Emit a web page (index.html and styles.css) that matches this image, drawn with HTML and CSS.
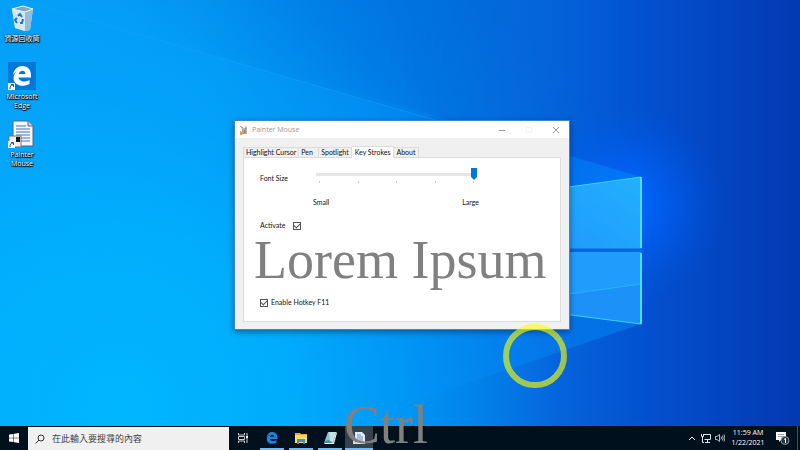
FILE: index.html
```html
<!DOCTYPE html>
<html lang="zh-Hant">
<head>
    <meta charset="UTF-8">
    <title>Painter Mouse</title>
    <meta name="viewport" content="width=device-width, initial-scale=1">
    <link rel="stylesheet" href="styles.css">
</head>
<body>

    <svg class="wallpaper" viewBox="0 0 800 450" preserveAspectRatio="xMidYMid slice" aria-hidden="true">
        <defs>
            <linearGradient id="base" x1="0" y1="0" x2="1" y2="0">
                <stop offset="0" stop-color="#069ff8"/>
                <stop offset="0.25" stop-color="#0499f5"/>
                <stop offset="0.5" stop-color="#0082ea"/>
                <stop offset="0.68" stop-color="#0567de"/>
                <stop offset="0.82" stop-color="#034fcd"/>
                <stop offset="1" stop-color="#0339b2"/>
            </linearGradient>
            <linearGradient id="topShade" gradientUnits="userSpaceOnUse" x1="330" y1="180" x2="480" y2="0">
                <stop offset="0" stop-color="#0060d0" stop-opacity="0"/>
                <stop offset="1" stop-color="#0058cc" stop-opacity="0.45"/>
            </linearGradient>
            <linearGradient id="topFade" x1="0" y1="0" x2="1" y2="0">
                <stop offset="0.5" stop-color="#fff"/>
                <stop offset="0.8" stop-color="#000"/>
            </linearGradient>
            <mask id="topMask">
                <rect width="800" height="450" fill="url(#topFade)"/>
            </mask>
            <radialGradient id="leftGlow" gradientUnits="userSpaceOnUse" cx="120" cy="410" r="440">
                <stop offset="0" stop-color="#00b6ff"/>
                <stop offset="0.4" stop-color="#00b2ff" stop-opacity="0.8"/>
                <stop offset="1" stop-color="#00a8ff" stop-opacity="0"/>
            </radialGradient>
            <radialGradient id="logoGlow" gradientUnits="userSpaceOnUse" cx="625" cy="205" r="100">
                <stop offset="0" stop-color="#006cff"/>
                <stop offset="0.4" stop-color="#0064ff" stop-opacity="0.6"/>
                <stop offset="1" stop-color="#0058e8" stop-opacity="0"/>
            </radialGradient>
            <linearGradient id="ray" gradientUnits="userSpaceOnUse" x1="20" y1="0" x2="480" y2="0">
                <stop offset="0" stop-color="#30b0ff" stop-opacity="0.1"/>
                <stop offset="1" stop-color="#20a4ff" stop-opacity="0.4"/>
            </linearGradient>
            <linearGradient id="beam" gradientUnits="userSpaceOnUse" x1="280" y1="0" x2="640" y2="0">
                <stop offset="0" stop-color="#009cff" stop-opacity="0"/>
                <stop offset="1" stop-color="#0090ff" stop-opacity="0.45"/>
            </linearGradient>
            <linearGradient id="pane" x1="0" y1="1" x2="1" y2="0">
                <stop offset="0" stop-color="#1f98fb"/>
                <stop offset="1" stop-color="#22b0ff"/>
            </linearGradient>
        </defs>
        <rect width="800" height="450" fill="url(#base)"/>
        <rect width="800" height="450" fill="url(#leftGlow)"/>
        <path d="M20 0H800V225L450 124Z" fill="url(#topShade)" mask="url(#topMask)"/>
        <path d="M20 0L480 133" stroke="url(#ray)" fill="none"/>
        <circle cx="625" cy="205" r="100" fill="url(#logoGlow)"/>
        <path d="M280 70L641 177V324L530 362L280 446Z" fill="url(#beam)"/>
        <path d="M540 191L641 177V249H540Z" fill="url(#pane)"/>
        <path d="M540 252H641V324L540 311Z" fill="#1f9cfc"/>
        <path d="M540 298L641 284V324L540 311Z" fill="#1c8ff5" opacity="0.8"/>
        <path d="M540 298L641 284" stroke="#24b4ff"/>
        <path d="M540 250H642" stroke="#0668d8" stroke-width="3"/>
        <path d="M540 191L641 177V248M540 311L641 324V253" fill="none" stroke="#3ad0ff"/>
        <path d="M641 177V248M641 253V324" stroke="#48e0ff" stroke-width="2"/>
    </svg>

    <main class="desktop">
        <nav class="shortcuts">
            <button class="shortcut" type="button">
                <svg class="shortcut-icon" viewBox="0 0 28 28">
                    <path d="M4 5l11-3 10 3-3 21-5 1-10-3z" fill="#b9d9ea"/>
                    <path d="M4 5l13 3v19l-10-3z" fill="#d7e7ef"/>
                    <path d="M17 8l8-3-3 21-5 1z" fill="#92bdd6"/>
                    <path d="M4 5l11-3 10 3-8 3z" fill="#7fa9bd" stroke="#e5f2f8"/>
                    <path d="M10 12l2-2 2 3M15 15l-1 4h-2M9 19l-2-3 2-2" fill="none" stroke="#1778d2" stroke-width="2"/>
                </svg>
                <span class="shortcut-name">資源回收筒</span>
            </button>
            <button class="shortcut" type="button">
                <svg class="shortcut-icon" viewBox="0 0 28 28">
                    <rect width="28" height="28" fill="#0078d7"/>
                    <path d="M5 13C6 7 10 4 14.500 4C20 4 23 8 23 13V15.500H10.500C10.700 19 16 21 21.500 18V22C14 26 5.500 23 5.500 16C5.500 12.500 7.500 10 10.500 8.500C8 9.500 6 11.500 5 13ZM10.800 12H17.500C17.500 7.500 11.500 7.500 10.800 12Z" fill="#fff"/>
                    <rect y="21" width="7" height="7" fill="#fff"/>
                    <path d="M2 27c0-3 1-4 3-4M3 22.500h2.500V25" fill="none" stroke="#1450a0"/>
                </svg>
                <span class="shortcut-name">Microsoft Edge</span>
            </button>
            <button class="shortcut" type="button">
                <svg class="shortcut-icon" viewBox="0 0 28 28">
                    <path d="M5 1h15l5 5v20H5z" fill="#f5f8fc" stroke="#54647c"/>
                    <path d="M20 1v5h5" fill="#cbd5e4" stroke="#54647c"/>
                    <path d="M8 6h10M8 9h14M8 12h14M8 15h14M8 18h14M12 21h10" stroke="#4472b8"/>
                    <rect x="1" y="16" width="12" height="11" fill="#eee" stroke="#777"/>
                    <path d="M8 17h4v5H8z" fill="#151515"/>
                    <rect y="21" width="7" height="7" fill="#fff"/>
                    <path d="M2 27c0-3 1-4 3-4M3 22.500h2.500V25" fill="none" stroke="#1450a0"/>
                </svg>
                <span class="shortcut-name">Painter Mouse</span>
            </button>
        </nav>

        <section class="window" aria-label="Painter Mouse">
            <header class="titlebar">
                <svg class="title-icon" viewBox="0 0 10 10">
                    <path d="M3 4L2 1l2 1 1 2 2-3 1 1-1 3 1 4H3z" fill="#b4aaa6"/>
                    <path d="M5 5l1 2-2 2M7 3v5" fill="none" stroke="#8a8482"/>
                    <path d="M1 6l3 1-1 3H1z" fill="#e2a03c"/>
                    <path d="M1 1l2 2" stroke="#df8d86"/>
                </svg>
                <h1 class="title">Painter Mouse</h1>
                <button class="title-btn" type="button" aria-label="Minimize">
                    <svg viewBox="0 0 8 8"><path d="M1 4.500h6" stroke="#999"/></svg>
                </button>
                <button class="title-btn" type="button" aria-label="Maximize" disabled>
                    <svg viewBox="0 0 8 8"><path d="M1.500 1.500h5v5h-5z" fill="none" stroke="#f4f4f4"/></svg>
                </button>
                <button class="title-btn" type="button" aria-label="Close">
                    <svg viewBox="0 0 8 8"><path d="M1 1l6 6M7 1l-6 6" stroke="#999"/></svg>
                </button>
            </header>

            <div class="window-body">
                <div class="tabs" role="tablist">
                    <button class="tab" type="button" role="tab">Highlight Cursor</button>
                    <button class="tab tab-pen" type="button" role="tab">Pen</button>
                    <button class="tab" type="button" role="tab">Spotlight</button>
                    <button class="tab active" type="button" role="tab" aria-selected="true">Key Strokes</button>
                    <button class="tab" type="button" role="tab">About</button>
                </div>

                <div class="tab-page" role="tabpanel">
                    <div class="size-row">
                        <label class="size-label" for="fontSize">Font Size</label>
                        <div class="slider">
                            <input class="range" type="range" id="fontSize" min="1" max="5" value="5">
                            <div class="ticks"><i></i><i></i><i></i><i></i><i></i></div>
                            <div class="range-names"><span>Small</span><span>Large</span></div>
                        </div>
                    </div>
                    <div class="check-row">
                        <label for="activate">Activate</label>
                        <input class="check" type="checkbox" id="activate" checked>
                    </div>
                    <p class="sample">Lorem Ipsum</p>
                    <div class="check-row hotkey">
                        <input class="check" type="checkbox" id="hotkey" checked>
                        <label for="hotkey">Enable Hotkey F11</label>
                    </div>
                </div>
            </div>
        </section>
    </main>

    <footer class="taskbar">
        <button class="start" type="button" aria-label="Start">
            <svg viewBox="0 0 10 10"><path d="M0 1.500L4.500 1v3.700H0zM5 .8L10 0v4.700H5zM0 5.200h4.500V9L0 8.500zM5 5.200h5V10L5 9.200z" fill="#fff"/></svg>
        </button>
        <div class="search">
            <svg class="search-icon" viewBox="0 0 10 10"><circle cx="6" cy="4" r="3" fill="none" stroke="#333"/><path d="M4 6L.5 9.500" stroke="#333"/></svg>
            <input class="search-input" type="text" placeholder="在此輸入要搜尋的內容" aria-label="搜尋">
        </div>
        <div class="apps">
            <button class="app" type="button" aria-label="Task View">
                <svg class="small-icon" viewBox="0 0 10 10"><path d="M.5 0v2h6V0M.5 10V8h6v2M.5 3.500h6v3h-6zM9 0v10" fill="none" stroke="#c8ced2"/><path d="M8 3h2v2H8z" fill="#fff"/></svg>
            </button>
            <button class="app open" type="button" aria-label="Edge">
                <svg viewBox="0 0 28 28"><path d="M3 13C4 6 9 2 14.500 2C21 2 25 7 25 13V16H10C10.500 20 17 22 23 18V23C14 28 3.500 25 3.500 16C3.500 12 6 9 9.500 7.500C6.500 8.500 4 11 3 13ZM10 11.500H18.500C18.500 6 11 6 10 11.500Z" fill="#1684e0"/></svg>
            </button>
            <button class="app open" type="button" aria-label="File Explorer">
                <svg viewBox="0 0 14 14"><path d="M1 2h5l1 1h6v9H1z" fill="#e8b033"/><path d="M1 4h12v8H1z" fill="#ffd869"/><path d="M3 8h8v5H9v-2H5v2H3z" fill="#3391dd"/></svg>
            </button>
            <button class="app open" type="button" aria-label="Notepad">
                <svg viewBox="0 0 14 14"><path d="M5 1h8l-3 11H1z" fill="#8bc4cb"/><path d="M6 1h7l-3 10-3-1z" fill="#bfe4e4"/><path d="M13 1l1 1-3 11-9 0-1-1h9z" fill="#e6eeee"/><path d="M2 10l4-1 3 3H1z" fill="#498b96"/></svg>
            </button>
            <button class="app open current" type="button" aria-label="Painter Mouse">
                <svg viewBox="0 0 14 14"><path d="M3 1h7l3 3v9H3z" fill="#e3ebf6"/><path d="M5 4h4M5 6h6M5 8h6M7 10h4" stroke="#6b8fc8"/><path d="M1 8h5v5H1z" fill="#d5d9df"/><path d="M3 9h2v2H3z" fill="#343c4c"/></svg>
            </button>
        </div>
        <div class="tray">
            <button class="tray-btn" type="button" aria-label="Hidden icons">
                <svg viewBox="0 0 10 10"><path d="M2 7l3-3 3 3" fill="none" stroke="#fff"/></svg>
            </button>
            <button class="tray-btn" type="button" aria-label="Network">
                <svg viewBox="0 0 10 10"><path d="M3 1.500h6.500v5H3.500M6.500 7v2.500M4 9.500h5M.5 1v2.500h2V1M1.500 3.500v6H3" fill="none" stroke="#dde2e8"/></svg>
            </button>
            <button class="tray-btn" type="button" aria-label="Volume">
                <svg viewBox="0 0 10 10"><path d="M.5 3.500H2L4.500 1.500v7L2 6.500H.5zM6 3.500q1 1.500 0 3M7.500 2.500q1.500 2.500 0 5M9 1.500q2 3.500 0 7" fill="none" stroke="#dde2e8" stroke-width=".8"/></svg>
            </button>
            <time class="clock" datetime="2021-01-22T11:59">11:59 AM<br>1/22/2021</time>
            <button class="notify" type="button" aria-label="Notifications">
                <svg viewBox="0 0 16 16"><path d="M2 2h10v8H7l-2 2v-2H2z" fill="#fff"/><path d="M4 4.500h6M4 6.500h6" stroke="#9aa"/><circle cx="11" cy="10.500" r="4" fill="#2b3138" stroke="#8d949b"/><path d="M10 9.500l1.500-1V13" fill="none" stroke="#fff"/></svg>
            </button>
        </div>
    </footer>

    <div class="cursor-ring"></div>
    <div class="keystroke">Ctrl</div>

</body>
</html>
```
FILE: styles.css
```css
* {
    box-sizing: border-box;
}

body {
    margin: 0;
    min-height: 100vh;
    display: flex;
    flex-direction: column;
    position: relative;
    background: #0078d7;
    font-family: "Open Sans", "Noto Sans CJK TC", sans-serif;
    font-size: 7px;
    color: #111;
}

button {
    margin: 0;
    padding: 0;
    border: none;
    background: none;
    color: inherit;
    font: inherit;
}

svg {
    display: block;
}

.wallpaper {
    position: absolute;
    inset: 0;
    width: 100%;
    height: 100%;
}

.desktop {
    position: relative;
    flex: 1;
}

/* desktop icons */
.shortcuts {
    display: grid;
    grid-auto-rows: 58px;
    justify-content: start;
    padding: 4px;
}

.shortcut {
    display: flex;
    flex-direction: column;
    align-items: center;
    gap: 2px;
    width: 36px;
}

.shortcut-icon {
    width: 28px;
    height: 28px;
}

.shortcut-name {
    color: #fff;
    font-size: 7px;
    line-height: 9px;
    text-align: center;
    text-shadow: 0 1px 1px #000, 1px 1px 1px #000, 0 0 2px #000;
}

/* application window */
.window {
    position: absolute;
    left: 234px;
    top: 120px;
    width: 336px;
    background: #f0f0f0;
    border: 1px solid #3d87c4;
    box-shadow: 0 2px 6px rgba(0, 0, 0, 0.4);
    font-family: Lato, sans-serif;
}

.titlebar {
    display: flex;
    align-items: center;
    height: 17px;
    padding-left: 4px;
    background: #fff;
}

.title-icon {
    width: 10px;
    height: 10px;
}

.title {
    flex: 1;
    margin: 0 0 0 3px;
    font-family: "Open Sans", sans-serif;
    font-size: 7px;
    font-weight: normal;
    color: #999;
}

.title-btn {
    display: grid;
    place-items: center;
    width: 27px;
    height: 16px;
}

.title-btn svg {
    width: 8px;
    height: 8px;
}

.window-body {
    padding: 8px 8px 7px;
}

.tabs {
    display: flex;
    align-items: flex-end;
    height: 11px;
}

.tab {
    height: 10px;
    padding: 0 2px;
    border: 1px solid #dcdcdc;
    border-left: none;
    border-bottom: none;
    line-height: 9px;
    white-space: nowrap;
}

.tab:first-child {
    border-left: 1px solid #dcdcdc;
}

.tab-pen {
    width: 20px;
    text-align: left;
}

.tab.active {
    height: 12px;
    margin-bottom: -1px;
    padding: 0 3px;
    background: #fff;
    position: relative;
}

.tab-page {
    padding: 10px 16px 14px;
    background: #fff;
    border: 1px solid #dcdcdc;
}

.size-row {
    display: flex;
    gap: 28px;
}

.size-label {
    width: 28px;
    margin-top: 6px;
    line-height: 9px;
    white-space: nowrap;
}

.slider {
    width: 161px;
}

.range {
    appearance: none;
    display: block;
    width: 100%;
    height: 12px;
    margin: 0;
    background: linear-gradient(#e6e6e6, #e6e6e6) center / 100% 3px no-repeat;
}

.range::-webkit-slider-thumb {
    appearance: none;
    width: 6px;
    height: 12px;
    background: #0078d7;
    clip-path: polygon(0 0, 100% 0, 100% 75%, 50% 100%, 0 75%);
}

.ticks {
    display: flex;
    justify-content: space-between;
    padding: 1px 3px;
}

.ticks i {
    width: 1px;
    height: 2px;
    background: #ccc;
}

.range-names {
    display: flex;
    justify-content: space-between;
    margin: 14px -2px 0 -3px;
    line-height: 9px;
}

.check-row {
    display: flex;
    align-items: center;
    gap: 8px;
    margin-top: 14px;
    line-height: 9px;
}

.check-row.hotkey {
    gap: 3px;
    margin-top: 8px;
}

.check {
    appearance: none;
    width: 8px;
    height: 8px;
    margin: 0;
    border: 1px solid #555;
    background: #fff;
    display: grid;
    place-items: center;
}

.check:checked::before {
    content: "";
    width: 5px;
    height: 3px;
    margin-bottom: 1px;
    border-left: 1px solid #555;
    border-bottom: 1px solid #555;
    transform: rotate(-45deg);
}

.sample {
    margin: 0 -6px;
    font-family: "Liberation Serif", serif;
    font-size: 54px;
    line-height: 60px;
    white-space: nowrap;
    color: #808080;
}

/* taskbar */
.taskbar {
    position: relative;
    display: flex;
    height: 24px;
    background: #00101c;
    color: #fff;
}

.start {
    display: grid;
    place-items: center;
    width: 28px;
}

.start svg {
    width: 10px;
    height: 10px;
}

.search {
    display: flex;
    align-items: center;
    gap: 7px;
    width: 201px;
    margin-top: 1px;
    padding-left: 7px;
    background: #f0f0f0;
}

.search-icon {
    width: 10px;
    height: 10px;
}

.search-input {
    flex: 1;
    min-width: 0;
    padding: 0;
    border: none;
    outline: none;
    background: none;
    font-family: "Noto Sans CJK TC", sans-serif;
    font-size: 9px;
}

.search-input::placeholder {
    color: #444;
}

.apps {
    display: flex;
}

.app {
    display: grid;
    place-items: center;
    width: 28px;
    margin-right: 1px;
    padding: 0 2px;
}

.app svg {
    width: 14px;
    height: 14px;
}

.app .small-icon {
    width: 10px;
    height: 10px;
}

.app.open {
    background: linear-gradient(#76b9ed, #76b9ed) bottom / 24px 2px no-repeat;
}

.app.current {
    background-color: #33424c;
    background-size: 100% 2px;
}

.tray {
    display: flex;
    align-items: center;
    margin-left: auto;
    padding-right: 2px;
    border-right: 1px solid #45505a;
    margin-right: 2px;
}

.tray-btn {
    width: 14px;
    padding: 0 2px;
}

.clock {
    width: 42px;
    font-size: 7px;
    line-height: 10px;
    text-align: center;
    white-space: nowrap;
}

.notify {
    width: 26px;
    padding: 0 5px;
}

/* highlight overlays */
.cursor-ring {
    position: absolute;
    left: 503px;
    top: 324px;
    width: 64px;
    height: 64px;
    border: 6px solid rgba(255, 255, 0, 0.62);
    border-radius: 50%;
    pointer-events: none;
}

.keystroke {
    position: absolute;
    left: 50%;
    bottom: 0;
    margin-left: -56px;
    font-family: "Liberation Serif", serif;
    font-size: 54px;
    line-height: 50px;
    color: #808080;
    pointer-events: none;
}
```
